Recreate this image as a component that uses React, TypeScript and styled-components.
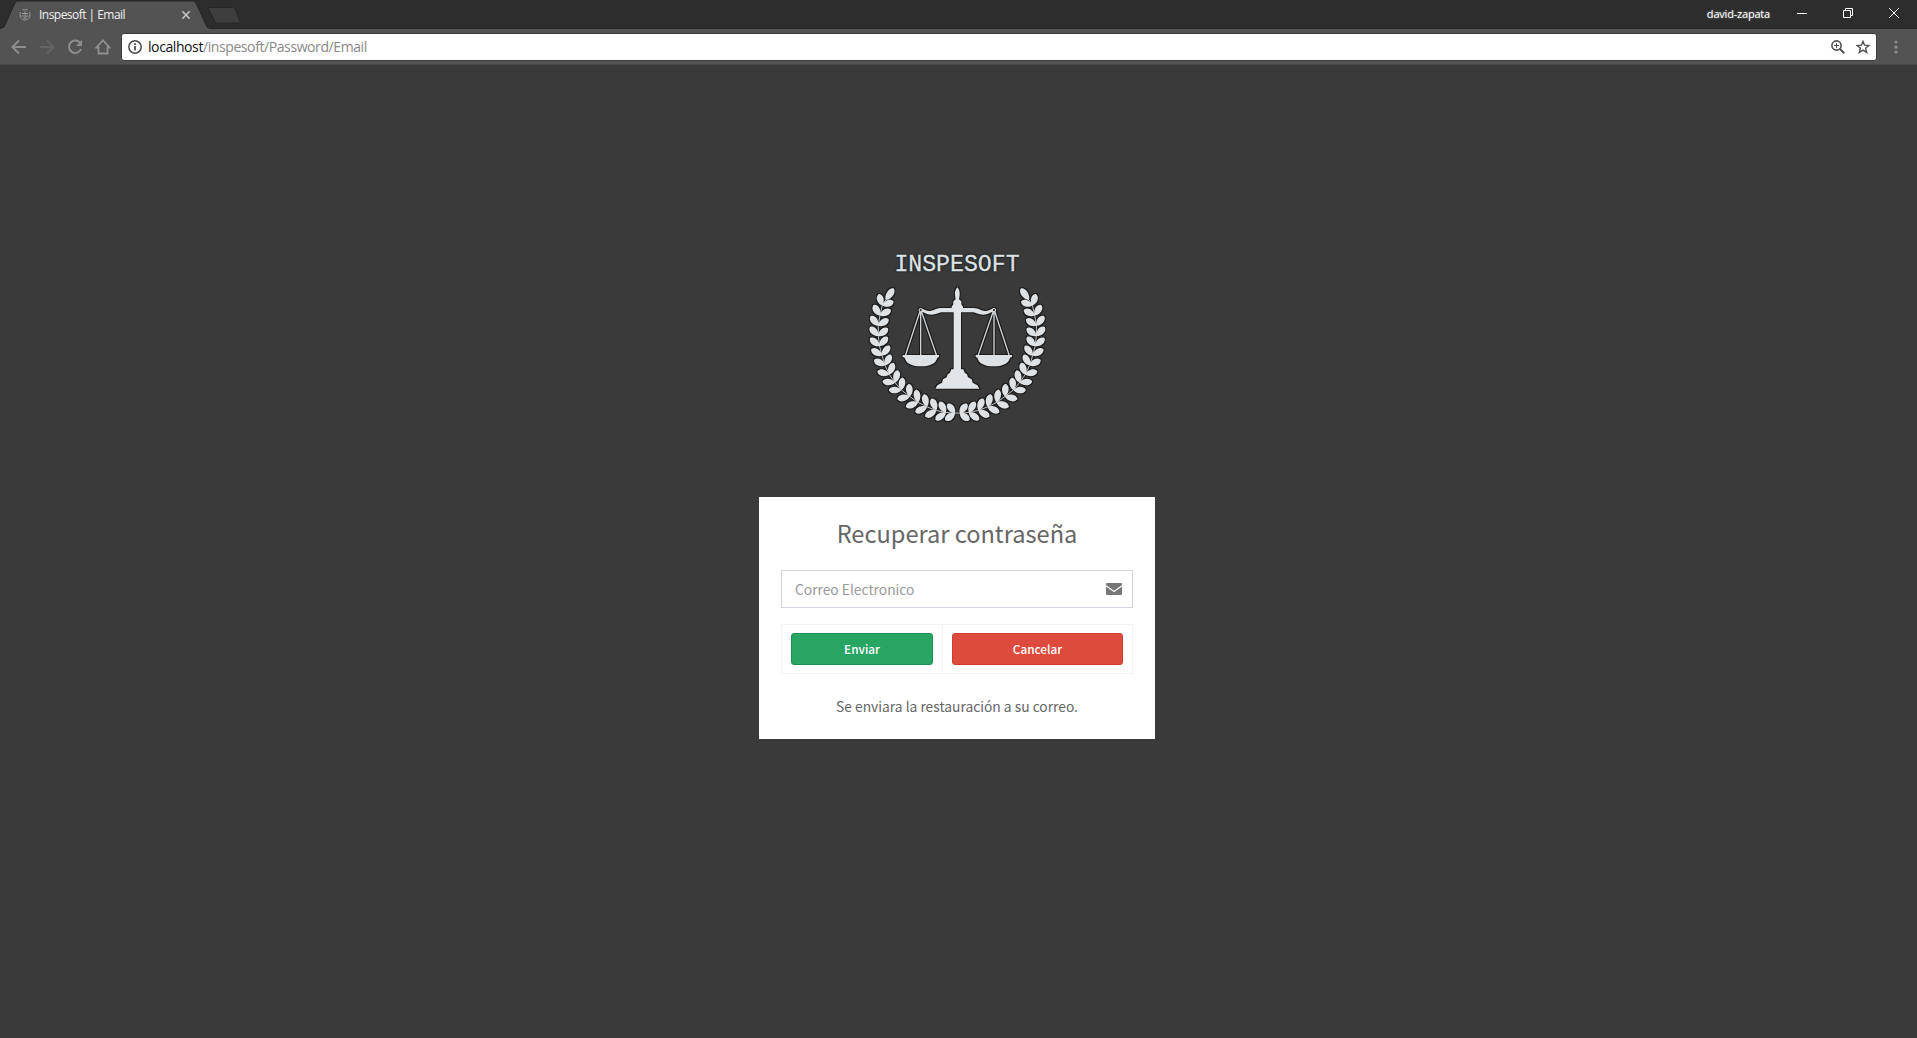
import React from 'react';
import styled, { createGlobalStyle } from 'styled-components';

const Global = createGlobalStyle`
  *, *::before, *::after { box-sizing: border-box; }
  html, body { margin: 0; height: 100%; overflow: hidden; }
  body { background: #3a3a3a; font-family: 'Noto Sans CJK SC', 'Noto Sans', sans-serif; }
  svg { display: block; flex: none; }
`;

const ui = `'Open Sans', 'Noto Sans', sans-serif`;

const Window = styled.div`
  display: flex;
  flex-direction: column;
  height: 100vh;
`;

const TabStrip = styled.div`
  display: flex;
  flex: none;
  height: 29px;
  background: #2d2d2d;
  border-bottom: 1px solid #262626;
`;

const Tab = styled.div`
  position: relative;
  display: flex;
  align-items: center;
  width: 208px;
  height: 29px;
  padding: 0 18px 0 19px;
`;

const TabShape = styled.svg`
  position: absolute;
  left: 0;
  top: 0;
`;

const Favicon = styled.svg`
  position: relative;
`;

const TabTitle = styled.span`
  position: relative;
  flex: 1;
  padding-left: 8px;
  font: 12px/29px ${ui};
  letter-spacing: -0.53px;
  color: #f1f1f1;
  white-space: nowrap;
`;

const TabClose = styled.svg`
  position: relative;
`;

const NewTab = styled.svg`
  margin-left: -2px;
`;

const WindowControls = styled.div`
  display: flex;
  align-items: center;
  height: 26px;
  margin-left: auto;
  padding-right: 18px;
`;

const User = styled.span`
  margin-right: 27px;
  padding-top: 2px;
  font: 11px/26px ${ui};
  letter-spacing: -0.2px;
  color: #fff;
  text-shadow: 0 0 2px #999;
`;

const ControlGlyph = styled.svg<{ $gap?: number }>`
  margin-right: ${(p) => p.$gap ?? 0}px;
`;

const Toolbar = styled.div`
  display: flex;
  flex: none;
  align-items: center;
  height: 36px;
  padding: 0 12px 0 11px;
  background: #535353;
  border-bottom: 1px solid #484848;
`;

const NavIcons = styled.div`
  display: flex;
  gap: 12px;
  width: 110px;
`;

const AddressBar = styled.div`
  display: flex;
  align-items: center;
  flex: 1;
  height: 28px;
  padding: 0 6px;
  background: #fff;
  border: 1px solid #3c3c3c;
  border-radius: 3px;
`;

const Url = styled.span`
  flex: 1;
  padding-left: 6px;
  font: 14px/26px ${ui};
  letter-spacing: -0.41px;
  color: #888;
`;

const Host = styled.span`
  color: #111;
`;

const MenuDots = styled.svg`
  margin-left: 14px;
`;

const Page = styled.main`
  display: flex;
  flex: 1;
  flex-direction: column;
  align-items: center;
  padding: 189px 3px 0 0;
`;

const Brand = styled.h1`
  margin: 0;
  height: 24px;
  font: 23.2px/22px 'Liberation Mono', monospace;
  color: #dfe2e5;
  -webkit-text-stroke: 0.3px #dfe2e5;
  text-shadow: 0 0 2px #111, 0 0 2px #111;
`;

const Emblem = styled.svg`
  margin: 0 4px 67px 0;
`;

const Card = styled.section`
  display: flex;
  flex-direction: column;
  width: 396px;
  height: 242px;
  padding: 22px;
  background: #fff;
  color: #666;
  text-align: center;
  & > * { flex: none; }
`;

const Title = styled.h2`
  margin: -3px 0 20px;
  font-size: 23.6px;
  font-weight: 400;
  line-height: 34px;
`;

const Field = styled.label`
  display: flex;
  align-items: center;
  justify-content: space-between;
  height: 38px;
  padding: 0 10px 0 13px;
  border: 1px solid #d2d6de;
  font-size: 13.8px;
  color: #999;
`;

const Actions = styled.div`
  display: grid;
  grid-template-columns: 160px 1fr;
  height: 50px;
  margin-top: 16px;
  border: 1px solid #f4f4f4;
`;

const Cell = styled.div`
  display: flex;
  padding: 8px 9px;
  & + & { border-left: 1px solid #f4f4f4; }
`;

const Button = styled.button<{ $bg: string; $edge: string }>`
  flex: 1;
  height: 32px;
  padding: 0 0 1px;
  border: 1px solid ${(p) => p.$edge};
  border-radius: 3px;
  background: ${(p) => p.$bg};
  color: #fff;
  font: 500 11.8px/28px 'Noto Sans CJK SC', sans-serif;
`;

const Note = styled.p`
  margin: 21px 0 0;
  font-size: 13.8px;
  line-height: 22px;
`;

type Pt = [number, number];

/* Outer and inner leaf centres of the left laurel branch, top to bottom. */
const pairs: [Pt, Pt][] = [
  [[91, 178], [115, 190]],
  [[79, 209], [108, 217]],
  [[72, 241], [102, 246]],
  [[71, 273], [101, 275]],
  [[73, 305], [102, 303]],
  [[78, 336], [109, 330]],
  [[87, 367], [115, 358]],
  [[98, 398], [125, 384]],
  [[114, 426], [140, 407]],
  [[133, 450], [156, 429]],
  [[158, 474], [178, 448]],
  [[183, 495], [201, 465]],
  [[211, 510], [226, 479]],
  [[240, 522], [251, 491]],
  [[270, 530], [277, 499]],
  [[299, 531], [303, 504]],
];

const nodes: Pt[] = pairs.map(([a, b]) => {
  const mx = (a[0] + b[0]) / 2;
  const my = (a[1] + b[1]) / 2;
  const dx = b[0] - a[0];
  const dy = b[1] - a[1];
  const len = Math.hypot(dx, dy);
  return [mx - (dy / len) * 14, my + (dx / len) * 14];
});

const leaf = (base: Pt, mid: Pt) => {
  const ux = mid[0] - base[0];
  const uy = mid[1] - base[1];
  const l = Math.hypot(ux, uy);
  const x = ux / l;
  const y = uy / l;
  const at = (f: number, s: number) =>
    `${(base[0] + x * f - y * s).toFixed(1)} ${(base[1] + y * f + x * s).toFixed(1)}`;
  const tip = l + 16;
  return `M${at(0, 0)}C${at(8, 11)} ${at(tip - 7, 15)} ${at(tip, 1.5)}Q${at(tip + 1, 0)} ${at(tip, -1.5)}C${at(tip - 7, -15)} ${at(8, -11)} ${at(0, 0)}Z`;
};

const leaves = [
  leaf([107, 180], [122, 159]),
  ...pairs.flatMap(([a, b], i) => [leaf(nodes[i], a), leaf(nodes[i], b)]),
].join('');
const stem = `M107 180L${nodes.map((n) => n.join(' ')).join('L')}L322 519`;

const Branch = () => (
  <>
    <path d={stem} fill="none" stroke="#dfe2e5" strokeWidth="2.500" />
    <path d={leaves} fill="#dfe2e5" />
  </>
);

const ScaleSide = () => (
  <>
    <path d="M312 204H272C258 205 250 213 236 213C226 213 221 207 213 205L208 214C222 216 230 224 244 224C260 224 266 217 280 217H312Z" fill="#dfe2e5" />
    <path d="M210 214L166 347M214 214L260 347M212 214V347" fill="none" stroke="#cfd2d5" strokeWidth="4" />
    <circle cx="212" cy="210" r="5" fill="#3a3a3a" stroke="#dfe2e5" strokeWidth="3" />
    <path d="M158 345H267V351L262 353C258 371 238 379 213 379C188 379 168 371 164 353L158 351Z" fill="#dfe2e5" />
  </>
);

const Logo = () => (
  <Emblem width="210" height="152" viewBox="0 114 630 456">
    <defs>
      <filter id="edge" x="-5%" y="-5%" width="110%" height="110%" colorInterpolationFilters="sRGB">
        <feMorphology in="SourceAlpha" operator="dilate" radius="2" />
        <feGaussianBlur stdDeviation="2" result="halo" />
        <feFlood floodColor="#1c1c1c" />
        <feComposite in2="halo" operator="in" />
        <feMerge>
          <feMergeNode />
          <feMergeNode in="SourceGraphic" />
        </feMerge>
      </filter>
    </defs>
    <g filter="url(#edge)">
      <Branch />
      <g transform="translate(644 0) scale(-1 1)"><Branch /></g>
      <ScaleSide />
      <g transform="translate(644 0) scale(-1 1)"><ScaleSide /></g>
      <path d="M322 142C327 147 330 156 329 165L327 178L334 184V193L339 200V206H333V388H340L344 398L351 403L354 412L365 418L368 428L382 436L388 446H256L262 436L276 428L279 418L290 412L293 403L300 398L304 388H311V206H305V200L310 193V184L317 178L315 165C314 156 317 147 322 142Z" fill="#e2e5e8" />
    </g>
  </Emblem>
);

const App = () => (
  <Window>
    <Global />
    <TabStrip>
      <Tab>
        <TabShape width="212" height="29" viewBox="0 0 212 29">
          <path d="M0 29L4 27L15 3Q16 1 18 1H193Q195 1 196 3L207 27L210 29Z" fill="#535353" />
          <path d="M0 28.5L4 27L15 3Q16 1 18 1H193Q195 1 196 3L207 27L210 28.5" fill="none" stroke="#242424" />
        </TabShape>
        <Favicon width="12" height="12" viewBox="0 0 12 12" fill="none" stroke="#9a9a9a">
          <path d="M3.500 .8H8.500M1.500 3C0 7 2 11 6 11S12 7 10.500 3M6 2.500V9M3 4.500H9M2.500 7H5M7 7H9.500M4.500 9H7.500" />
        </Favicon>
        <TabTitle>Inspesoft | Email</TabTitle>
        <TabClose width="8" height="8" viewBox="0 0 8 8" stroke="#c8c8c8" strokeWidth="1.500">
          <path d="M.3 .3L7.700 7.700M7.700 .3L.3 7.700" />
        </TabClose>
      </Tab>
      <NewTab width="36" height="28" viewBox="205 0 36 28">
        <path d="M208.500 7.500H232Q233.500 7.500 234 9L239 21Q239.500 23 238 23H216Q214.500 23 214 21.500L207.500 9Q207 7.500 208.500 7.500Z" fill="#3e3e3e" stroke="#262626" />
      </NewTab>
      <WindowControls>
        <User>david-zapata</User>
        <ControlGlyph $gap={36} width="10" height="10" viewBox="0 0 10 10"><path d="M0 5.500H10" stroke="#fff" /></ControlGlyph>
        <ControlGlyph $gap={36} width="10" height="10" viewBox="0 0 10 10" fill="none" stroke="#fff"><path d="M.5 2.500H7.500V9.500H.5ZM2.500 2.500V.5H9.500V7.500H7.500" /></ControlGlyph>
        <ControlGlyph width="10" height="10" viewBox="0 0 10 10" stroke="#fff"><path d="M.2 .2L9.800 9.800M9.800 .2L.2 9.800" /></ControlGlyph>
      </WindowControls>
    </TabStrip>
    <Toolbar>
      <NavIcons>
        <svg width="16" height="16" viewBox="0 0 16 16" fill="none" stroke="#8e8e8e" strokeWidth="2"><path d="M15 8H2M8 1.500L1.500 8L8 14.500" /></svg>
        <svg width="16" height="16" viewBox="0 0 16 16" fill="none" stroke="#656565" strokeWidth="2"><path d="M1 8H14M8 1.500L14.500 8L8 14.500" /></svg>
        <svg width="16" height="16" viewBox="0 0 16 16" fill="none" stroke="#8e8e8e" strokeWidth="2"><path d="M13.500 4.500A6.200 6.200 0 1 0 14 10" /><path d="M15 1V7H9Z" fill="#8e8e8e" stroke="none" /></svg>
        <svg width="16" height="16" viewBox="0 0 16 16" fill="none" stroke="#8e8e8e" strokeWidth="1.800"><path d="M8 1.300L14.500 8.500H12.500V14.500H3.500V8.500H1.500Z" /></svg>
      </NavIcons>
      <AddressBar>
        <svg width="14" height="14" viewBox="0 0 14 14" fill="none" stroke="#4a4a4a" strokeWidth="1.500"><circle cx="7" cy="7" r="6.200" /><path d="M7 6V10.500M7 3.300V5" strokeWidth="1.800" /></svg>
        <Url><Host>localhost</Host>/inspesoft/Password/Email</Url>
        <ControlGlyph $gap={11} width="14" height="14" viewBox="0 0 14 14" fill="none" stroke="#505050" strokeWidth="1.600"><circle cx="5.500" cy="5.500" r="4.600" /><path d="M9 9L13.200 13.200" strokeWidth="2" /><path d="M3 5.500H8M5.500 3V8" strokeWidth="1" /></ControlGlyph>
        <svg width="14" height="14" viewBox="0 0 14 14" fill="none" stroke="#505050" strokeWidth="1.400"><path d="M7 1.400L8.600 5.200L12.900 5.500L9.600 8.200L10.700 12.400L7 10.100L3.300 12.400L4.400 8.200L1.100 5.500L5.400 5.200Z" /></svg>
      </AddressBar>
      <MenuDots width="14" height="14" viewBox="0 0 14 14" fill="#8e8e8e"><circle cx="5" cy="2" r="1.600" /><circle cx="5" cy="7" r="1.600" /><circle cx="5" cy="12" r="1.600" /></MenuDots>
    </Toolbar>
    <Page>
      <Brand>INSPESOFT</Brand>
      <Logo />
      <Card>
        <Title>Recuperar contraseña</Title>
        <Field>
          Correo Electronico
          <svg width="16" height="12" viewBox="0 0 16 12"><rect width="16" height="12" rx="1" fill="#777" /><path d="M0 2.800L8 8.500L16 2.800" fill="none" stroke="#fff" strokeWidth="1.300" /></svg>
        </Field>
        <Actions>
          <Cell><Button $bg="#27a563" $edge="#1e8f54">Enviar</Button></Cell>
          <Cell><Button $bg="#dc4b3e" $edge="#d33a2c">Cancelar</Button></Cell>
        </Actions>
        <Note>Se enviara la restauración a su correo.</Note>
      </Card>
    </Page>
  </Window>
);

export default App;
